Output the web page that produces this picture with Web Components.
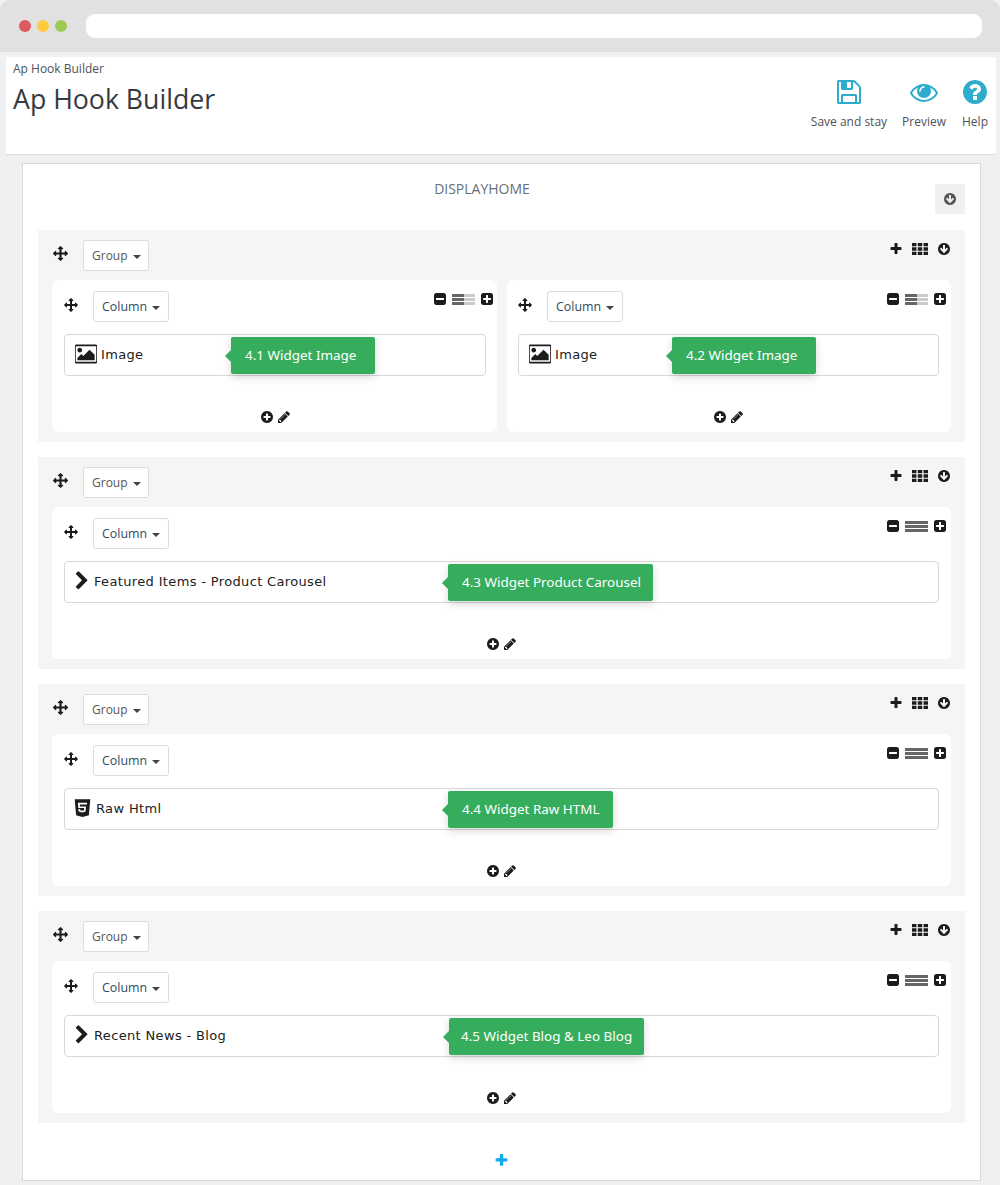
<!DOCTYPE html>
<html lang="en">
<head>
<meta charset="utf-8">
<title>Ap Hook Builder</title>
<style>
  html, body { margin: 0; padding: 0; background: #eff0f2; }
  body { height: 1185px; overflow: hidden; font-family: "Open Sans", sans-serif; color: #363a41; }
</style>
</head>
<body>
  <browser-bar></browser-bar>
  <page-header crumb="Ap Hook Builder" heading="Ap Hook Builder">
    <tool-link icon="save" label="Save and stay"></tool-link>
    <tool-link icon="eye" label="Preview"></tool-link>
    <tool-link icon="help" label="Help"></tool-link>
  </page-header>
  <hook-panel name="DISPLAYHOME">
    <hook-group>
      <hook-column fill="50">
        <hook-widget icon="image" tip="4.1 Widget Image" tip-left="167" tip-width="144">Image</hook-widget>
      </hook-column>
      <hook-column fill="50">
        <hook-widget icon="image" tip="4.2 Widget Image" tip-left="154" tip-width="144">Image</hook-widget>
      </hook-column>
    </hook-group>
    <hook-group>
      <hook-column>
        <hook-widget icon="chevron" tip="4.3 Widget Product Carousel" tip-left="384" tip-width="205">Featured Items - Product Carousel</hook-widget>
      </hook-column>
    </hook-group>
    <hook-group>
      <hook-column>
        <hook-widget icon="html5" tip="4.4 Widget Raw HTML" tip-left="384" tip-width="165">Raw Html</hook-widget>
      </hook-column>
    </hook-group>
    <hook-group>
      <hook-column>
        <hook-widget icon="chevron" tip="4.5 Widget Blog &amp; Leo Blog" tip-left="385" tip-width="195" tip-pad="12">Recent News - Blog</hook-widget>
      </hook-column>
    </hook-group>
  </hook-panel>

<script>
const circle = "q0 209-103 385.500t-279.500 279.500-385.500 103-385.500-103-279.500-279.500-103-385.500 103-385.500 279.500-279.500 385.500-103 385.500 103 279.500 279.500 103 385.500z";
const square = "v960q0 119-84.500 203.500t-203.500 84.500h-960q-119 0-203.500-84.500t-84.500-203.500v-960q0-119 84.500-203.500t203.500-84.500h960q119 0 203.500 84.500t84.500 203.500z";

const ICONS = {
  move: "M1792 896q0 26-19 45l-256 256q-19 19-45 19t-45-19-19-45v-128h-384v384h128q26 0 45 19t19 45-19 45l-256 256q-19 19-45 19t-45-19l-256-256q-19-19-19-45t19-45 45-19h128v-384h-384v128q0 26-19 45t-45 19-45-19l-256-256q-19-19-19-45t19-45l256-256q19-19 45-19t45 19 19 45v128h384v-384h-128q-26 0-45-19t-19-45 19-45l256-256q19-19 45-19t45 19l256 256q19 19 19 45t-19 45-45 19h-128v384h384v-128q0-26 19-45t45-19 45 19l256 256q19 19 19 45z",
  plus: "M1600 736v192q0 40-28 68t-68 28h-416v416q0 40-28 68t-68 28h-192q-40 0-68-28t-28-68v-416h-416q-40 0-68-28t-28-68v-192q0-40 28-68t68-28h416v-416q0-40 28-68t68-28h192q40 0 68 28t28 68v416h416q40 0 68 28t28 68z",
  grid: "M0 224h500v370h-500zM646 224h500v370h-500zM1292 224h500v370h-500zM0 711h500v370h-500zM646 711h500v370h-500zM1292 711h500v370h-500zM0 1198h500v370h-500zM646 1198h500v370h-500zM1292 1198h500v370h-500z",
  down: "M1412 897q0-27-18-45l-91-91q-18-18-45-18t-45 18l-189 189v-502q0-26-19-45t-45-19h-128q-26 0-45 19t-19 45v502l-189-189q-19-19-45-19t-45 19l-91 91q-18 18-18 45t18 45l362 362 91 91q18 18 45 18t45-18l91-91 362-362q18-18 18-45zm252-1" + circle,
  minusbox: "M1408 960v-128q0-26-19-45t-45-19h-896q-26 0-45 19t-19 45v128q0 26 19 45t45 19h896q26 0 45-19t19-45zm256-544" + square,
  plusbox: "M1408 960v-128q0-26-19-45t-45-19h-320v-320q0-26-19-45t-45-19h-128q-26 0-45 19t-19 45v320h-320q-26 0-45 19t-19 45v128q0 26 19 45t45 19h320v320q0 26 19 45t45 19h128q26 0 45-19t19-45v-320h320q26 0 45-19t19-45zm256-544" + square,
  pluscircle: "M1344 960v-128q0-26-19-45t-45-19h-256v-256q0-26-19-45t-45-19h-128q-26 0-45 19t-19 45v256h-256q-26 0-45 19t-19 45v128q0 26 19 45t45 19h256v256q0 26 19 45t45 19h128q26 0 45-19t19-45v-256h256q26 0 45-19t19-45zm320-64" + circle,
  pencil: "M491 1536l91-91-235-235-91 91v107h128v128h107zm523-928q0-22-22-22-10 0-17 7l-542 542q-7 7-7 17 0 22 22 22 10 0 17-7l542-542q7-7 7-17zm-54-192l416 416-832 832h-416v-416zm683 96q0 53-37 90l-166 166-416-416 166-165q36-38 90-38 53 0 91 38l235 234q37 39 37 91z",
  image: "M576 576q0 80-56 136t-136 56-136-56-56-136 56-136 136-56 136 56 56 136zm1024 384v448h-1408v-192l320-320 160 160 512-512zm96-704h-1600q-13 0-22.500 9.500t-9.500 22.500v1216q0 13 9.500 22.500t22.500 9.500h1600q13 0 22.500-9.500t9.500-22.500v-1216q0-13-9.500-22.500t-22.500-9.500zm160 32v1216q0 66-47 113t-113 47h-1600q-66 0-113-47t-47-113v-1216q0-66 47-113t113-47h1600q66 0 113 47t47 113z",
  chevron: "M1363 877l-742 742q-19 19-45 19t-45-19l-166-166q-19-19-19-45t19-45l531-531-531-531q-19-19-19-45t19-45l166-166q19-19 45-19t45 19l742 742q19 19 19 45t-19 45z",
  html5: "M230 96h1332l-121 1366-547 154-543-154zM1290 408h-790l40 444h500l-18 192-160 44-160-44-11-116h-142l21 228 292 80 292-80 40-440h-520l-12-152h618z",
  save: "M512 1536h768v-384h-768v384zm896 0h128v-896q0-14-10-38.500t-20-34.500l-281-281q-10-10-34-20t-39-10v416q0 40-28 68t-68 28h-576q-40 0-68-28t-28-68v-416h-128v1280h128v-416q0-40 28-68t68-28h832q40 0 68 28t28 68v416zm-384-928v-320q0-13-9.500-22.500t-22.500-9.500h-192q-13 0-22.500 9.500t-9.500 22.500v320q0 13 9.500 22.500t22.500 9.500h192q13 0 22.500-9.500t9.500-22.500zm640 32v928q0 40-28 68t-68 28h-1344q-40 0-68-28t-28-68v-1344q0-40 28-68t68-28h928q40 0 88 20t76 48l280 280q28 28 48 76t20 88z",
  eye: "M1664 960q-152-236-381-353 61 104 61 225 0 185-131.500 316.500t-316.500 131.500-316.500-131.500-131.500-316.500q0-121 61-225-229 117-381 353 133 205 333.500 326.500t434.500 121.500 434.500-121.500 333.500-326.500zm-720-384q0-20-14-34t-34-14q-125 0-214.500 89.500t-89.500 214.500q0 20 14 34t34 14 34-14 14-34q0-86 61-147t147-61q20 0 34-14t14-34zm848 384q0 34-20 69-140 230-376.500 368.500t-499.500 138.500-499.500-139-376.500-368q-20-35-20-69t20-69q140-229 376.500-368t499.500-139 499.500 139 376.500 368q20 35 20 69z",
  help: "M1024 1376v-192q0-14-9-23t-23-9h-192q-14 0-23 9t-9 23v192q0 14 9 23t23 9h192q14 0 23-9t9-23zm256-672q0-88-55.500-163t-138.500-116-170-41q-243 0-371 213-15 24 8 42l132 100q7 6 19 6 16 0 25-12 53-68 86-92 34-24 86-24 48 0 85.500 26t37.500 59q0 38-20 61t-68 45q-63 28-115.500 86.500t-52.500 125.500v36q0 14 9 23t23 9h192q14 0 23-9t9-23q0-19 21.500-49.500t54.500-49.500q32-18 49-28.500t46-35 44.500-48 28-60.500 12.500-81zm384 192" + circle
};

class HookIcon extends HTMLElement {
  connectedCallback() {
    const size = this.getAttribute("size") || 14;
    const color = this.getAttribute("color") || "#1c1c1c";
    const path = ICONS[this.getAttribute("name")];
    this.attachShadow({ mode: "open" }).innerHTML = `
      <style>
        :host { display: block; width: ${size}px; height: ${size}px; flex: none; }
        svg { display: block; width: 100%; height: 100%; fill: ${color}; }
      </style>
      <svg viewBox="0 0 1792 1792"><path d="${path}"/></svg>`;
  }
}

class BrowserBar extends HTMLElement {
  connectedCallback() {
    this.attachShadow({ mode: "open" }).innerHTML = `
      <style>
        :host {
          display: flex;
          align-items: center;
          height: 52px;
          box-sizing: border-box;
          padding: 0 18px 0 19px;
          background: #e1e1e1;
          border-radius: 10px 10px 0 0;
        }
        .dot { width: 12px; height: 12px; border-radius: 50%; margin-right: 6px; }
        .bar { flex: 1; height: 24px; margin-left: 13px; border-radius: 9px; background: #fff; }
      </style>
      <span class="dot" style="background:#dc5b60"></span>
      <span class="dot" style="background:#fdcb3c"></span>
      <span class="dot" style="background:#9ccb51"></span>
      <div class="bar"></div>`;
  }
}

class PageHeader extends HTMLElement {
  connectedCallback() {
    this.attachShadow({ mode: "open" }).innerHTML = `
      <style>
        :host {
          display: flex;
          justify-content: space-between;
          height: 98px;
          box-sizing: border-box;
          margin: 5px 4px 0 6px;
          padding: 5px 7px 0 7px;
          background: #fff;
          border-bottom: 1px solid #dcdddf;
        }
        .crumb { font-size: 12px; line-height: 14px; color: #4d5157; }
        h1 { margin: 5px 0 0; font-size: 26.7px; line-height: 36px; font-weight: 400; color: #363a41; }
        .tools { display: flex; gap: 15px; padding-top: 16px; }
      </style>
      <div>
        <div class="crumb">${this.getAttribute("crumb")}</div>
        <h1>${this.getAttribute("heading")}</h1>
      </div>
      <div class="tools"><slot></slot></div>`;
  }
}

class ToolLink extends HTMLElement {
  connectedCallback() {
    this.attachShadow({ mode: "open" }).innerHTML = `
      <style>
        :host { display: flex; flex-direction: column; align-items: center; }
        span { margin-top: 8px; font-size: 12px; line-height: 16px; color: #4d5157; }
      </style>
      <hook-icon name="${this.getAttribute("icon")}" size="28" color="#2eacce"></hook-icon>
      <span>${this.getAttribute("label")}</span>`;
  }
}

class HookPanel extends HTMLElement {
  connectedCallback() {
    this.attachShadow({ mode: "open" }).innerHTML = `
      <style>
        :host {
          display: block;
          box-sizing: border-box;
          height: 1018px;
          margin: 8px 19px 0 22px;
          padding: 20px 15px 0;
          background: #fff;
          border: 1px solid #d9dadc;
        }
        .top { display: flex; align-items: flex-start; margin-bottom: 16px; }
        .name { flex: 1; padding-right: 9px; text-align: center; font-size: 14px; line-height: 10px; color: #656f78; }
        .toggle { display: grid; place-items: center; width: 30px; height: 30px; background: #f0f0f0; }
        .groups { display: grid; gap: 15px; }
        .add { display: flex; justify-content: center; margin-top: 30px; }
      </style>
      <div class="top">
        <div class="name">${this.getAttribute("name")}</div>
        <div class="toggle"><hook-icon name="down" size="14" color="#555"></hook-icon></div>
      </div>
      <div class="groups"><slot></slot></div>
      <div class="add"><hook-icon name="plus" size="15" color="#12a9ee"></hook-icon></div>`;
  }
}

class DropButton extends HTMLElement {
  connectedCallback() {
    this.attachShadow({ mode: "open" }).innerHTML = `
      <style>
        :host {
          display: inline-flex;
          align-items: center;
          box-sizing: border-box;
          height: 31px;
          padding: 0 8px;
          background: #fff;
          border: 1px solid #dcdcdc;
          border-radius: 3px;
          font-size: 12px;
          color: #555;
        }
        i { margin-left: 5px; margin-top: 2px; border: 4px solid transparent; border-top-color: #444; border-bottom: 0; }
      </style>
      <slot></slot><i></i>`;
  }
}

class HookGroup extends HTMLElement {
  connectedCallback() {
    this.attachShadow({ mode: "open" }).innerHTML = `
      <style>
        :host { display: block; box-sizing: border-box; height: 212px; padding: 10px 14px; background: #f5f5f5; }
        .head { display: flex; align-items: flex-start; height: 40px; }
        .head > hook-icon { margin: 6px 15px 0 1px; }
        .head drop-button { padding-right: 7px; }
        .tools { display: flex; gap: 9px; margin-left: auto; height: 18px; align-items: center; }
        .cols { display: flex; gap: 10px; }
        ::slotted(hook-column) { flex: 1; min-width: 0; }
        ::slotted(hook-column:first-child:not(:last-child)) { flex: none; width: 445px; }
      </style>
      <div class="head">
        <hook-icon name="move" size="15"></hook-icon>
        <drop-button>Group</drop-button>
        <div class="tools">
          <hook-icon name="plus" size="14"></hook-icon>
          <hook-icon name="grid" size="16"></hook-icon>
          <hook-icon name="down" size="14"></hook-icon>
        </div>
      </div>
      <div class="cols"><slot></slot></div>`;
  }
}

class HookColumn extends HTMLElement {
  connectedCallback() {
    const fill = this.getAttribute("fill") || 100;
    this.attachShadow({ mode: "open" }).innerHTML = `
      <style>
        :host { display: block; box-sizing: border-box; height: 152px; padding: 11px 12px 0; background: #fff; border-radius: 6px; }
        :host(:first-child:not(:last-child)) { padding-right: 11px; }
        :host(:last-child:not(:first-child)) { padding-left: 11px; }
        .head { display: flex; align-items: flex-start; height: 43px; }
        .head > hook-icon { margin: 7px 15px 0 0; }
        .head drop-button { color: #2f4b62; font-size: 12.4px; }
        .tools { display: flex; gap: 5px; margin: 1px -8px 0 auto; height: 14px; align-items: center; }
        .bars {
          width: 23px;
          height: 11px;
          background:
            repeating-linear-gradient(to bottom, transparent 0 3px, #fff 3px 4px),
            linear-gradient(to right, #666 ${fill}%, #ccc ${fill}%);
        }
        .foot { display: flex; justify-content: center; align-items: center; gap: 3px; margin-top: 34px; }
      </style>
      <div class="head">
        <hook-icon name="move" size="14"></hook-icon>
        <drop-button>Column</drop-button>
        <div class="tools">
          <hook-icon name="minusbox" size="14"></hook-icon>
          <div class="bars"></div>
          <hook-icon name="plusbox" size="14"></hook-icon>
        </div>
      </div>
      <slot></slot>
      <div class="foot">
        <hook-icon name="pluscircle" size="14"></hook-icon>
        <hook-icon name="pencil" size="14"></hook-icon>
      </div>`;
  }
}

class HookWidget extends HTMLElement {
  connectedCallback() {
    const icon = this.getAttribute("icon");
    const size = { image: 22, chevron: 20, html5: 21 }[icon];
    const pad = this.getAttribute("tip-pad") || 14;
    this.attachShadow({ mode: "open" }).innerHTML = `
      <style>
        :host {
          display: flex;
          align-items: center;
          position: relative;
          box-sizing: border-box;
          height: 42px;
          padding: 0 0 2px 9px;
          gap: 4px;
          background: #fff;
          border: 1px solid #d8d8d8;
          border-radius: 4px;
          font-family: "DejaVu Sans", sans-serif;
          font-size: 13px;
          letter-spacing: 0.35px;
          color: #222;
        }
        hook-icon.image { margin-left: 1px; }
        hook-icon.chevron { margin: 0 -2px; }
        hook-icon.html5 { margin: 0 -1px 0 -2px; }
        .tip {
          position: absolute;
          top: 2px;
          left: ${this.getAttribute("tip-left") - 1}px;
          width: ${this.getAttribute("tip-width")}px;
          height: 37px;
          box-sizing: border-box;
          padding: 0 0 1px ${pad}px;
          display: flex;
          align-items: center;
          background: #35ad5c;
          border-radius: 2px;
          font-family: "Noto Sans", sans-serif;
          font-size: 13.45px;
          letter-spacing: 0;
          color: #fff;
          white-space: nowrap;
          box-shadow: 0 3px 8px rgba(0, 0, 0, 0.16);
        }
        .tip::before {
          content: "";
          position: absolute;
          left: -6px;
          top: 13px;
          border: 6px solid transparent;
          border-left: 0;
          border-right-color: #35ad5c;
        }
      </style>
      <hook-icon class="${icon}" name="${icon}" size="${size}"></hook-icon>
      <slot></slot>
      <div class="tip">${this.getAttribute("tip").replace("&", "&amp;")}</div>`;
  }
}

customElements.define("hook-icon", HookIcon);
customElements.define("browser-bar", BrowserBar);
customElements.define("tool-link", ToolLink);
customElements.define("page-header", PageHeader);
customElements.define("drop-button", DropButton);
customElements.define("hook-widget", HookWidget);
customElements.define("hook-column", HookColumn);
customElements.define("hook-group", HookGroup);
customElements.define("hook-panel", HookPanel);
</script>
</body>
</html>
